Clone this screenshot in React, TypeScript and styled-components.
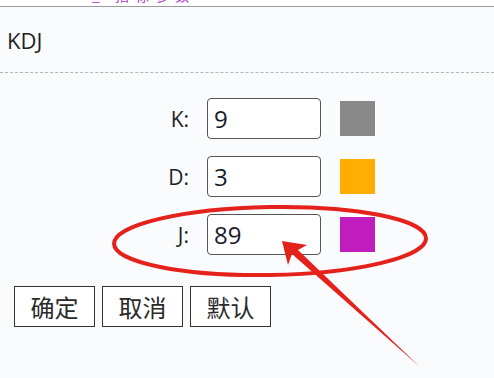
import styled, { createGlobalStyle } from 'styled-components';

const GlobalStyle = createGlobalStyle`
  html, body {
    margin: 0;
    padding: 0;
    background: #fafbfd;
  }
  body {
    font-family: "Open Sans", "Noto Sans CJK SC", sans-serif;
    color: #1f1f1f;
  }
`;

const Page = styled.div`
  position: relative;
  width: 494px;
  height: 378px;
  overflow: hidden;
  background: #fafbfd;
`;

// strip of the window above, only the feet of its title show
const TopStrip = styled.div`
  height: 6px;
  overflow: hidden;
  background: #ffffff;
  border-bottom: 1px solid #9a9a9a;
  padding-left: 92px;
  color: #b03cc8;
  font-size: 14px;
  line-height: 1;
  letter-spacing: 6px;
`;

const Clipped = styled.div`
  margin-top: -12px;
  font-family: "Noto Sans CJK SC", sans-serif;
`;

const Header = styled.div`
  height: 65px;
  display: flex;
  align-items: center;
  padding-left: 7px;
  font-size: 22px;
  border-bottom: 1px dashed #b5b5b5;
`;

const Form = styled.div`
  display: flex;
  flex-direction: column;
  gap: 17px;
  padding-top: 25px;
`;

const Row = styled.div`
  display: flex;
  align-items: center;
  padding-left: 139px;
`;

const Label = styled.span`
  width: 50px;
  text-align: right;
  font-size: 21px;
  margin-right: 18px;
`;

const Field = styled.div`
  width: 114px;
  height: 41px;
  box-sizing: border-box;
  border: 1px solid #555;
  border-radius: 4px;
  background: #ffffff;
  display: flex;
  align-items: center;
  padding-left: 6px;
  font-size: 24px;
  color: #1a1a2a;
`;

const Swatch = styled.div<{ $color: string }>`
  width: 35px;
  height: 35px;
  margin-left: 19px;
  background: ${p => p.$color};
`;

const Buttons = styled.div`
  display: flex;
  gap: 7px;
  padding: 31px 0 0 14px;
`;

const Button = styled.button`
  width: 81px;
  height: 41px;
  box-sizing: border-box;
  border: 1px solid #333;
  border-radius: 0;
  background: #ffffff;
  font-family: "Noto Sans CJK SC", sans-serif;
  font-size: 24px;
  line-height: 1;
  color: #2a2a2a;
  padding: 0;
`;

const Overlay = styled.svg`
  position: absolute;
  left: 0;
  top: 0;
  pointer-events: none;
`;

const rows = [
  { label: 'K:', value: '9', color: '#898989' },
  { label: 'D:', value: '3', color: '#ffad00' },
  { label: 'J:', value: '89', color: '#c01cbe' },
];

export default function App() {
  return (
    <Page>
      <GlobalStyle />
      <TopStrip>
        <Clipped>_ 指标参数</Clipped>
      </TopStrip>
      <Header>KDJ</Header>
      <Form>
        {rows.map(r => (
          <Row key={r.label}>
            <Label>{r.label}</Label>
            <Field>{r.value}</Field>
            <Swatch $color={r.color} />
          </Row>
        ))}
      </Form>
      <Buttons>
        <Button>确定</Button>
        <Button>取消</Button>
        <Button>默认</Button>
      </Buttons>
      <Overlay width="494" height="378" viewBox="0 0 494 378">
        <ellipse
          cx="270"
          cy="241"
          rx="156"
          ry="34"
          transform="rotate(-1 270 241)"
          fill="none"
          stroke="#e5211b"
          strokeWidth="4"
        />
        <path
          d="M282 241 L307 245 L298 250 L420 367 L292 254 L288 265 Z"
          fill="#e5211b"
        />
      </Overlay>
    </Page>
  );
}
